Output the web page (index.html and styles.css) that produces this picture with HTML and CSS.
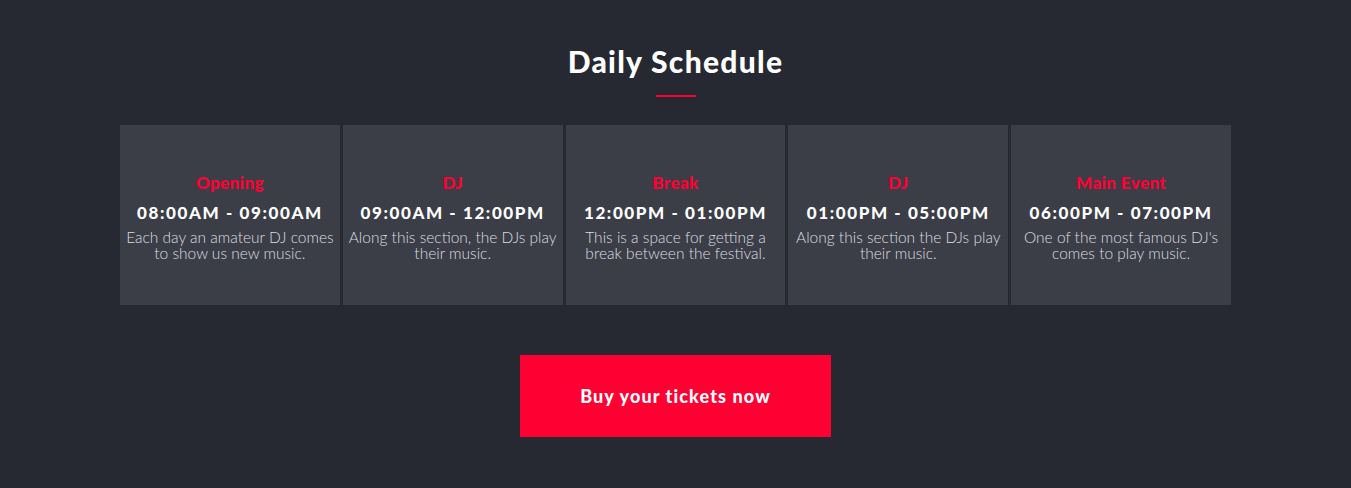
FILE: index.html
```html
<!DOCTYPE html>
<html>
<head>
<meta charset="utf-8">
<link rel="stylesheet" href="styles.css">
</head>
<body>
<section class="schedule">
  <h2 class="title">Daily Schedule</h2>
  <div class="rule"></div>
  <div class="cards">
    <div class="card">
      <h3 class="card-title">Opening</h3>
      <div class="card-time">08:00AM - 09:00AM</div>
      <p class="card-text">Each day an amateur DJ comes to show us new music.</p>
    </div>
    <div class="card">
      <h3 class="card-title">DJ</h3>
      <div class="card-time">09:00AM - 12:00PM</div>
      <p class="card-text">Along this section, the DJs play their music.</p>
    </div>
    <div class="card">
      <h3 class="card-title">Break</h3>
      <div class="card-time">12:00PM - 01:00PM</div>
      <p class="card-text">This is a space for getting a break between the festival.</p>
    </div>
    <div class="card">
      <h3 class="card-title">DJ</h3>
      <div class="card-time">01:00PM - 05:00PM</div>
      <p class="card-text">Along this section the DJs play their music.</p>
    </div>
    <div class="card">
      <h3 class="card-title">Main Event</h3>
      <div class="card-time">06:00PM - 07:00PM</div>
      <p class="card-text">One of the most famous DJ's comes to play music.</p>
    </div>
  </div>
  <div class="cta-wrap">
    <a class="cta" href="#">Buy your tickets now</a>
  </div>
</section>
</body>
</html>
```
FILE: styles.css
```css
html, body {
  margin: 0;
  padding: 0;
  background: #262932;
}
body {
  height: 488px;
  overflow: hidden;
  font-family: "Lato", sans-serif;
}
.schedule {
  display: flex;
  flex-direction: column;
  align-items: center;
  padding-top: 43px;
}
.title {
  margin: 0;
  font-family: "Lato", sans-serif;
  font-weight: 900;
  font-size: 30px;
  line-height: 36px;
  letter-spacing: 1.3px;
  color: #ffffff;
}
.rule {
  width: 40px;
  height: 2px;
  background: #ff0033;
  margin-top: 16px;
}
.cards {
  display: flex;
  gap: 3px;
  width: 1111px;
  margin-top: 28px;
}
.card {
  flex: 1;
  height: 180px;
  background: #3b3e47;
  box-sizing: border-box;
  padding: 48px 4px 0;
  text-align: center;
}
.card-title {
  margin: 0;
  font-family: "Lato", sans-serif;
  font-weight: 900;
  font-size: 17px;
  line-height: 20px;
  letter-spacing: 0.4px;
  color: #ff0033;
}
.card-time {
  margin-top: 10px;
  font-family: "Lato", sans-serif;
  font-weight: 900;
  font-size: 17px;
  line-height: 20px;
  letter-spacing: 1.6px;
  color: #ffffff;
}
.card-text {
  margin: 6px 0 0;
  font-family: "Lato", sans-serif;
  font-weight: 300;
  font-size: 15.5px;
  line-height: 16px;
  color: #dcdde2;
}
.cta-wrap {
  margin-top: 50px;
  display: flex;
  justify-content: center;
}
.cta {
  display: flex;
  align-items: center;
  justify-content: center;
  width: 311px;
  height: 82px;
  background: #ff0033;
  color: #ffffff;
  text-decoration: none;
  font-family: "Lato", sans-serif;
  font-weight: 900;
  font-size: 18px;
  letter-spacing: 1.1px;
}
```
